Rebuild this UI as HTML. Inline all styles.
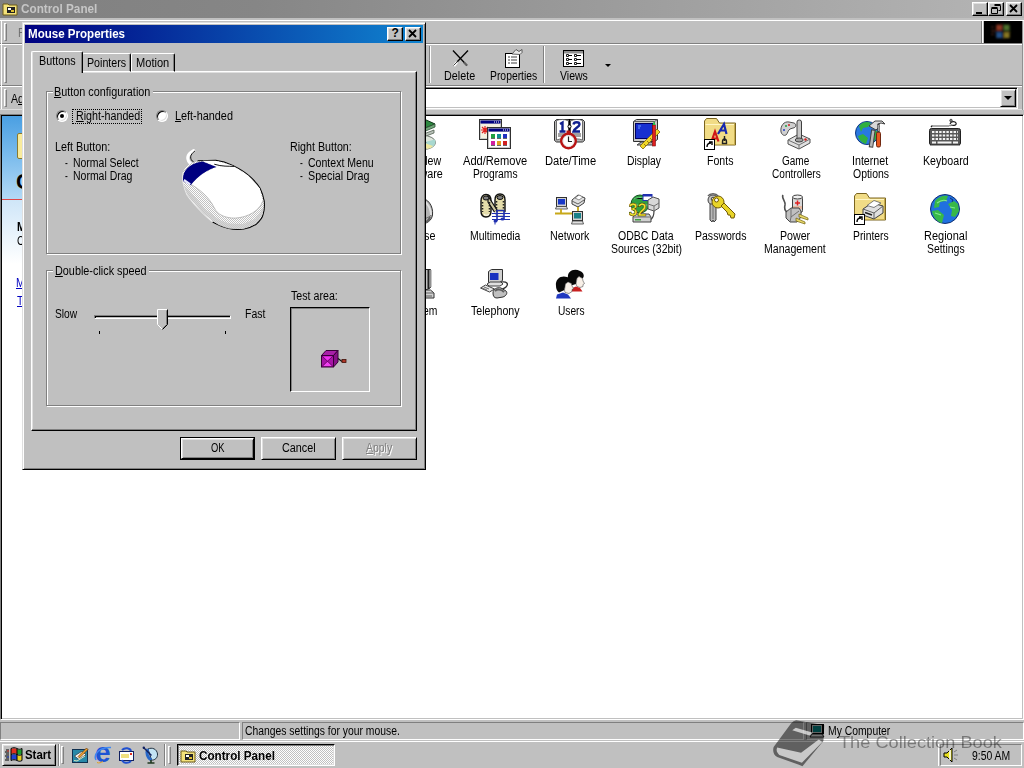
<!DOCTYPE html>
<html><head><meta charset="utf-8"><title>Control Panel</title>
<style>
*{box-sizing:border-box;margin:0;padding:0}
html,body{width:1024px;height:768px;overflow:hidden}
body{background:#c0c0c0;font-family:"Liberation Sans",sans-serif;font-size:12.5px;color:#000;position:relative;line-height:14px}
.a{position:absolute}
.t{position:absolute;white-space:nowrap;line-height:14px;transform-origin:0 0}
u{text-decoration:underline;text-underline-offset:1px;text-decoration-thickness:1px}
.btn{position:absolute;background:#c0c0c0;border:1px solid;border-color:#fff #000 #000 #fff;box-shadow:inset 1px 1px #dfdfdf,inset -1px -1px #808080}
.cap{position:absolute;width:16px;height:14px;background:#c0c0c0;border:1px solid;border-color:#fff #000 #000 #fff;box-shadow:inset -1px -1px #808080,inset 1px 1px #dfdfdf}
.grp{position:absolute;border:1px solid #808080;box-shadow:1px 1px 0 #fff,inset 1px 1px 0 #fff}
.ico{position:absolute;width:32px;height:32px}
.grip{position:absolute;width:3px;border:1px solid;border-color:#fff #808080 #808080 #fff}
.radio{width:12px;height:12px;border-radius:50%;background:#fff;border:1px solid;border-color:#808080 #fff #fff #808080;box-shadow:inset 1px 1px #000,inset -1px -1px #dfdfdf}
.hl{position:absolute;left:0;width:1024px;height:1px}
</style></head><body>
<div class="a" style="left:0;top:0;width:1024px;height:18px;background:linear-gradient(90deg,#808080 0%,#868686 25%,#b5b5b5 100%)"></div>
<svg class="a" style="left:2px;top:1px" width="17" height="16" viewBox="0 0 17 16"><path d="M1 3h5l1 1h8v10H1z" fill="#f4e27a" stroke="#6b5b1a" stroke-width="1"/><rect x="5" y="6" width="8" height="6" fill="#222"/><rect x="6" y="7" width="3" height="2" fill="#fff"/><rect x="9" y="9" width="3" height="2" fill="#e0c030"/></svg>
<div class="t" style="left:20.50px;top:2.00px;font-size:12.5px;transform:scaleX(0.9396);font-weight:bold;color:#c6c6c6;">Control Panel</div>
<div class="cap" style="left:972px;top:2px"><div class="a" style="left:3px;top:9px;width:6px;height:2px;background:#000"></div></div>
<div class="cap" style="left:988px;top:2px"><svg class="a" style="left:1px;top:0" width="12" height="12" viewBox="0 0 12 12"><path d="M4.5 2.5h6v5h-2M4.500 1.500h6" stroke="#000" fill="none"/><path d="M1.500 5.500h6v5h-6zM1.500 4.500h6" stroke="#000" fill="none"/></svg></div>
<div class="cap" style="left:1006px;top:2px"><svg class="a" style="left:2px;top:1px" width="10" height="9" viewBox="0 0 10 9"><path d="M1 1l7 7M8 1l-7 7" stroke="#000" stroke-width="1.8"/></svg></div>
<div class="hl" style="top:20px;background:#fff"></div>
<div class="hl" style="top:43px;background:#808080"></div>
<div class="hl" style="top:44px;background:#fff"></div>
<div class="hl" style="top:85px;background:#808080"></div>
<div class="hl" style="top:86px;background:#fff"></div>
<div class="hl" style="top:109px;background:#dfdfdf"></div>
<div class="a" style="left:1px;top:21px;width:1px;height:88px;background:#fff"></div>
<div class="a" style="left:1022px;top:21px;width:1px;height:89px;background:#909090"></div><div class="a" style="left:1023px;top:21px;width:1px;height:89px;background:#e8e8e8"></div>
<div class="grip" style="left:4px;top:23px;height:18px"></div>
<div class="grip" style="left:4px;top:47px;height:36px"></div>
<div class="grip" style="left:4px;top:89px;height:18px"></div>
<div class="t" style="left:18.43px;top:26.00px;font-size:12.5px;transform:scaleX(0.8703);color:#707070;">File</div>
<div class="t" style="left:11.20px;top:92.00px;font-size:12.5px;transform:scaleX(0.8398);">A<u>d</u>dress</div>
<div class="a" style="left:981px;top:21px;width:1px;height:22px;background:#808080"></div><div class="a" style="left:982px;top:21px;width:1px;height:22px;background:#fff"></div>
<div class="a" style="left:984px;top:21px;width:38px;height:22px;background:#000"></div>
<svg class="a" style="left:990px;top:21px" width="27" height="22" viewBox="0 0 22 18"><defs><filter id="bl"><feGaussianBlur stdDeviation=".9"/></filter></defs><g filter="url(#bl)" opacity=".7"><rect x="5" y="3" width="5" height="5" fill="#c85030"/><rect x="11" y="3" width="5" height="5" fill="#70a040"/><rect x="5" y="9" width="5" height="5" fill="#3070c0"/><rect x="11" y="9" width="5" height="5" fill="#c0a830"/><path d="M10.500 2v13M4 8.500h13" stroke="#101010" stroke-width="1.300"/><path d="M1 5h2M1 8h3M1 11h2" stroke="#804030" stroke-width="1"/></g></svg>
<div class="a" style="left:429px;top:46px;width:1px;height:37px;background:#808080"></div><div class="a" style="left:430px;top:46px;width:1px;height:37px;background:#fff"></div>
<svg class="a" style="left:451px;top:49px" width="19" height="18" viewBox="0 0 19 18"><path d="M2 1.5L16 16.500" stroke="#000" stroke-width="1.300"/><path d="M17 1.500L6 13" stroke="#000" stroke-width="1.300"/><path d="M6 13L3 17" stroke="#fff" stroke-width="2.500"/><path d="M6.500 12.500L2.500 16.500" stroke="#404040" stroke-width="1"/><path d="M13 13.500L16 16.500" stroke="#606060" stroke-width="2"/></svg>
<div class="t" style="left:443.64px;top:69.00px;font-size:12.5px;transform:scaleX(0.8613);">Delete</div>
<svg class="a" style="left:504px;top:48px" width="20" height="20" viewBox="0 0 20 20"><rect x="1.500" y="5.500" width="14" height="14" fill="#fff" stroke="#000"/><path d="M4 9h2M7 9h6M4 12h2M7 12h6M4 15h2M7 15h6" stroke="#404040"/><path d="M8 6l4-4.500l3 2l3-2v3l-2 2z" fill="#e8e8e8" stroke="#404040" stroke-width=".8"/></svg>
<div class="t" style="left:489.97px;top:69.00px;font-size:12.5px;transform:scaleX(0.8291);">Properties</div>
<div class="a" style="left:543px;top:46px;width:1px;height:37px;background:#808080"></div><div class="a" style="left:544px;top:46px;width:1px;height:37px;background:#fff"></div>
<svg class="a" style="left:563px;top:50px" width="22" height="17" viewBox="0 0 22 17"><rect x=".5" y=".5" width="20" height="16" fill="#fff" stroke="#000"/><rect x="1" y="1" width="19" height="2.500" fill="#909090"/><path d="M3.500 4.500h2v2h-2zM11.500 4.500h2v2h-2zM3.500 8.500h2v2h-2zM11.500 8.500h2v2h-2zM3.500 12.500h2v2h-2zM11.500 12.500h2v2h-2z" fill="none" stroke="#000" stroke-width=".9"/><path d="M6 5.500h3M14 5.500h4M6 9.500h3M14 9.500h4M6 13.500h3M14 13.500h4" stroke="#000"/></svg>
<div class="t" style="left:560.40px;top:69.00px;font-size:12.5px;transform:scaleX(0.8397);">Views</div>
<div class="a" style="left:604.5px;top:64px;width:0;height:0;border:3px solid transparent;border-top:3.5px solid #000;border-bottom:0"></div>
<div class="a" style="left:58px;top:87px;width:960px;height:22px;background:#fff;border:1px solid;border-color:#808080 #fff #fff #808080;box-shadow:inset 1px 1px #000,inset -1px -1px #c0c0c0"></div>
<div class="btn" style="left:1000px;top:89px;width:16px;height:18px"><div class="a" style="left:3px;top:6px;border:4px solid transparent;border-top:4px solid #000;border-bottom:0;width:0;height:0"></div></div>
<div class="a" style="left:0;top:114px;width:1024px;height:606px;background:#fff;border:1px solid;border-color:#808080 #fff #fff #808080;box-shadow:inset 1px 1px #000,inset -1px -1px #c0c0c0"></div>
<div class="a" style="left:2px;top:116px;width:198px;height:84px;background:linear-gradient(180deg,#4a9fe2 0%,#78baec 45%,#b4daf6 100%)"></div>
<div class="a" style="left:2px;top:200px;width:198px;height:64px;background:linear-gradient(180deg,#cfe6f8 0%,#ffffff 100%)"></div>
<div class="a" style="left:2px;top:199px;width:198px;height:1px;background:#e04848"></div>
<div class="a" style="left:17px;top:133px;width:32px;height:26px;background:#f8eb9c;border:1px solid #8a7a30;border-radius:2px"></div>
<div class="t" style="left:16px;top:167px;font-size:22px;font-weight:bold;line-height:30px">Control Panel</div>
<div class="t" style="left:17.00px;top:220.00px;font-size:12.5px;transform:scaleX(0.8326);font-weight:bold;">Mouse</div>
<div class="t" style="left:17.00px;top:234.00px;font-size:12.5px;transform:scaleX(0.8096);">Changes settings</div>
<div class="t" style="left:16.16px;top:276.00px;font-size:12.5px;transform:scaleX(0.8433);color:#0000c0;"><u>Microsoft Home</u></div>
<div class="t" style="left:17.00px;top:294.00px;font-size:12.5px;transform:scaleX(0.8309);color:#0000c0;"><u>Technical Support</u></div>
<svg class="ico" style="left:404px;top:118px" viewBox="0 0 32 32"><path d="M6 7l14-6l11 5l-14 6z" fill="#2c8840" stroke="#103818"/><path d="M6 7l11 5l14-6v3l-14 6l-11-5z" fill="#70a878" stroke="#305038" stroke-width=".8"/><path d="M8 13l9 4l13-5v3l-13 5l-9-4z" fill="#b8c0b8" stroke="#506050" stroke-width=".8"/><ellipse cx="19" cy="24.500" rx="12.500" ry="7" fill="#dfe6dc" stroke="#707870"/><path d="M19 24.500l12-3c1 3 0 6-3 8z" fill="#a8d8d0"/><path d="M19 24.500l4 6.500c3-.5 5-1.500 6-3z" fill="#f0e8a0"/><ellipse cx="19" cy="24.500" rx="3" ry="1.700" fill="#fff" stroke="#808080"/></svg>
<div class="t" style="left:398.00px;top:154.00px;font-size:12.5px;transform:scaleX(0.8512);">Add New</div>
<div class="t" style="left:396.14px;top:167.00px;font-size:12.5px;transform:scaleX(0.8641);">Hardware</div>
<svg class="ico" style="left:479px;top:118px" viewBox="0 0 32 32"><rect x=".5" y="1.500" width="22" height="20" fill="#c8c8c8" stroke="#303030"/><rect x="2" y="6" width="19" height="14" fill="#f4f0e0"/><rect x="1.500" y="2.500" width="20" height="3" fill="#000080"/><path d="M15 4h1M17 4h1M19 4h1" stroke="#fff"/><path d="M2 12h8M6 8v8M3 9l6 6M9 9l-6 6" stroke="#e02020" stroke-width="1.200"/><rect x="8.500" y="9.500" width="23" height="21" fill="#c8c8c8" stroke="#303030"/><rect x="10" y="14" width="20" height="15" fill="#fff"/><rect x="9.500" y="10.500" width="21" height="3" fill="#000080"/><path d="M24 12h1M26 12h1M28 12h1" stroke="#fff"/><rect x="12" y="16" width="4" height="4" fill="#20a040"/><rect x="18" y="16" width="4" height="4" fill="#109090"/><rect x="24" y="16" width="4" height="4" fill="#2030c0"/><rect x="12" y="23" width="4" height="4" fill="#d020a0"/><rect x="18" y="23" width="4" height="4" fill="#e0a020"/><rect x="24" y="23" width="4" height="4" fill="#d02020"/><path d="M12 20.500h4M18 20.500h4M24 20.500h4M12 27.500h4M18 27.500h4M24 27.500h4" stroke="#404040" stroke-width=".8"/></svg>
<div class="t" style="left:463.00px;top:154.00px;font-size:12.5px;transform:scaleX(0.8879);">Add/Remove</div>
<div class="t" style="left:473.08px;top:167.00px;font-size:12.5px;transform:scaleX(0.8218);">Programs</div>
<svg class="ico" style="left:554px;top:118px" viewBox="0 0 32 32"><path d="M.5 3.500l2-2h26l2 2v19l-2 1.500h-26l-2-1.500z" fill="#b8b8b8" stroke="#303030"/><path d="M2.500 2.500c4-1.500 8-1.500 12 .5v19c-4-1.500-8-1.500-12 0z" fill="#fff" stroke="#505050" stroke-width=".8"/><path d="M28.500 2.500c-4-1.500-8-1.500-12 .5v19c4-1.500 8-1.500 12 0z" fill="#fff" stroke="#505050" stroke-width=".8"/><path d="M15.500 1v6M15.500 10v5" stroke="#000" stroke-width="1.600"/><circle cx="15.500" cy="8.500" r="1.600" fill="#fff" stroke="#000"/><path d="M6 6l2.500-1.500v9M5.500 13.500h6" stroke="#102090" stroke-width="2.400" fill="none"/><path d="M19.500 6.500c.5-3 6-3 6 0c0 2.500-5 3.500-6 7h6.500" stroke="#102090" stroke-width="2.400" fill="none"/><path d="M4 16h9M4 18h9M18 16h9M18 18h9" stroke="#303030" stroke-width=".9"/><circle cx="14.500" cy="23" r="7.200" fill="#fff" stroke="#b81414" stroke-width="2.600"/><path d="M14.500 18.500v5h3.500" stroke="#202020" stroke-width="1.200" fill="none"/><rect x="12.500" y="12.500" width="4" height="3" fill="#b81414"/><circle cx="14.500" cy="23" r="5.600" fill="none" stroke="#d8d8d8" stroke-width=".8"/></svg>
<div class="t" style="left:544.81px;top:154.00px;font-size:12.5px;transform:scaleX(0.8944);">Date/Time</div>
<svg class="ico" style="left:629px;top:118px" viewBox="0 0 32 32"><path d="M4.500 3.500l3-2h21v20l-3 2h-21z" fill="#c8c8c8" stroke="#303030"/><path d="M25.500 3.500l3-2M4.500 3.500h21v20" fill="none" stroke="#606060"/><rect x="6.500" y="5.500" width="17" height="15" fill="#1830d0" stroke="#000060"/><path d="M9 8h3M9 10h2" stroke="#70a0ff"/><path d="M8 27l4-3h10l4 3z" fill="#b0b0b0" stroke="#404040"/><path d="M11 28l17-17l3 3l-17 17z" fill="#f0d828" stroke="#806010" stroke-width=".8"/><path d="M15 26l2 2M18 23l2 2M21 20l2 2M24 17l2 2" stroke="#806010" stroke-width=".8"/><rect x="23.500" y="7" width="3" height="21" fill="#e02020" stroke="#801010" stroke-width=".6"/><path d="M23.500 7l1.500-4l1.500 4z" fill="#20c040"/></svg>
<div class="t" style="left:627.47px;top:154.00px;font-size:12.5px;transform:scaleX(0.8298);">Display</div>
<svg class="ico" style="left:704px;top:118px" viewBox="0 0 32 32"><path d="M.5 27V3l2-2.500h10l3 4.500h16v22z" fill="#f1dc86" stroke="#7a6420" stroke-width="1"/><path d="M1.500 6.500h29" stroke="#fff6c4" stroke-width="1"/><path d="M30.500 6v20.500h-29" stroke="#c8ae50" stroke-width="1" fill="none"/><path d="M7.500 23.500l3.500-10l3.500 10M9 20.500h4.500" stroke="#d01818" stroke-width="2.200" fill="none"/><path d="M14 16l6-10l2.500 10M16 12.500h6" stroke="#1828b0" stroke-width="2.200" fill="none"/><path d="M18.500 24c0-4 4-4 4 0v1.500h-4zM20.500 18v5" stroke="#202020" stroke-width="1.400" fill="none"/><rect x=".5" y="21.500" width="10" height="10" fill="#fff" stroke="#000"/><path d="M3 29c0-3 2-4 4-4M5 24h3v3" fill="none" stroke="#000" stroke-width="1.400"/></svg>
<div class="t" style="left:706.75px;top:154.00px;font-size:12.5px;transform:scaleX(0.8463);">Fonts</div>
<svg class="ico" style="left:779px;top:118px" viewBox="0 0 32 32"><path d="M2 14c-1-6 3-11 8-10l5 1c3 1 2 5-1 5l-3 1c-2 1-2 4-4 6c-2 1-4 0-5-3z" fill="#d0d0d0" stroke="#505050"/><circle cx="7" cy="8" r="1" fill="#20a040"/><circle cx="10" cy="7" r="1" fill="#d02020"/><circle cx="5" cy="12" r="1" fill="#2040c0"/><path d="M9 22l11-6l11 5v4l-11 6l-11-5z" fill="#e0e0e0" stroke="#505050"/><path d="M9 22l11 5l11-6M20 27v4" fill="none" stroke="#707070"/><rect x="18" y="2" width="4.500" height="20" rx="2" fill="#c8c8c8" stroke="#404040"/><ellipse cx="20.200" cy="22" rx="4" ry="2" fill="#a0a0a0" stroke="#404040"/><circle cx="26.500" cy="21.500" r="1.300" fill="#d02020"/></svg>
<div class="t" style="left:781.70px;top:154.00px;font-size:12.5px;transform:scaleX(0.8009);">Game</div>
<div class="t" style="left:771.50px;top:167.00px;font-size:12.5px;transform:scaleX(0.8058);">Controllers</div>
<svg class="ico" style="left:854px;top:118px" viewBox="0 0 32 32"><circle cx="13" cy="15" r="11.500" fill="#2878e0" stroke="#103880"/><path d="M5 8c3-4 8-5 12-3l-3 4l-5 1l-2 4z" fill="#30b040"/><path d="M4 18l5-2l5 4l-2 6c-4-1-7-4-8-8z" fill="#30b040"/><path d="M18 12l5 1l1 6l-4 4z" fill="#30b040"/><path d="M15 8l6-5h7l3 3l-4-1l-3 1l1 3l-3 3z" fill="#d8d8d8" stroke="#404040"/><rect x="16.500" y="12" width="3.500" height="17" fill="#b8b8b8" stroke="#404040" transform="rotate(8 18 20)"/><rect x="22.500" y="14" width="4" height="15" rx="1.500" fill="#e85820" stroke="#702810"/><rect x="23.700" y="6" width="1.600" height="8" fill="#a0a0a0" stroke="#404040" stroke-width=".6"/></svg>
<div class="t" style="left:851.65px;top:154.00px;font-size:12.5px;transform:scaleX(0.8541);">Internet</div>
<div class="t" style="left:852.50px;top:167.00px;font-size:12.5px;transform:scaleX(0.8359);">Options</div>
<svg class="ico" style="left:929px;top:118px" viewBox="0 0 32 32"><path d="M21 6c1-3 5-3 6-1c1 2-2 3-5 2" fill="none" stroke="#202020" stroke-width="1.200"/><circle cx="22" cy="2.500" r="1.300" fill="#808080" stroke="#202020" stroke-width=".6"/><path d="M2 9l1.500-1.500M4.500 8h1M6.500 8h1M8.500 8h1M10.500 8h1M12.500 8h1M14.500 8h1M16.500 8h1M18.500 8h1M20.500 7.500h1" stroke="#202020" stroke-width="1.400"/><rect x=".5" y="10.500" width="31" height="16.500" rx="2" fill="#585858" stroke="#202020"/><path d="M3 14h26M3 17.500h26M3 21h26" stroke="#f4f4f4" stroke-width="2.200" stroke-dasharray="2.400 1.200"/><path d="M3 24.500h4M8.500 24.500h14M24 24.500h5" stroke="#f4f4f4" stroke-width="2.200"/><path d="M1 27.500h30" stroke="#a0a0a0"/></svg>
<div class="t" style="left:922.85px;top:154.00px;font-size:12.5px;transform:scaleX(0.8524);">Keyboard</div>
<svg class="ico" style="left:404px;top:193px" viewBox="0 0 32 32"><path d="M4 22c-3-9 4-17 12-17c8 0 13.500 8 12.500 17c-1 6-6 9-12 9c-6 0-11-3-12.500-9z" fill="#b4b4b4" stroke="#303030"/><path d="M6 23c4 4 15 5 21.500-1" fill="none" stroke="#707070"/><path d="M14 6c7 0 13 8 13 16" fill="none" stroke="#e0e0e0" stroke-width="2"/><path d="M26 24c-1 4-5 6-10 6" fill="none" stroke="#606060" stroke-width="2"/></svg>
<div class="t" style="left:403.34px;top:229.00px;font-size:12.5px;transform:scaleX(0.8642);">Mouse</div>
<svg class="ico" style="left:479px;top:193px" viewBox="0 0 32 32"><path d="M2 8c0-4 2-6.500 5-6.500s5 2.500 5 6.500v10c0 4-2 6-5 6s-5-2-5-6z" fill="#e4dcaa" stroke="#101010" stroke-width="1.400"/><path d="M16 7c0-4 2-6 5-6s5 2 5 6v11c0 3-2 5-5 5s-5-2-5-5z" fill="#e4dcaa" stroke="#101010" stroke-width="1.400"/><path d="M9 3l9 14v6l-9-14z" fill="#cfc8a0" stroke="#101010" stroke-width="1.200"/><ellipse cx="7" cy="5" rx="3" ry="2" fill="#808080" stroke="#101010"/><ellipse cx="21" cy="4.500" rx="3" ry="2" fill="#808080" stroke="#101010"/><path d="M3.500 9v10M10.500 9v10M17.500 8v10M24.500 8v10" stroke="#202020" stroke-width="1.600" stroke-dasharray="1.500 1.500"/><path d="M5 21.500c2 1 3 1 5 0M19 20.500c2 1 3 1 5 0" stroke="#fff" stroke-width="1" fill="none"/><rect x="13" y="19" width="18" height="10" fill="#fff" opacity=".75"/><path d="M13 20.500h18M13 23.500h18M13 26.500h18" stroke="#2030b0" stroke-width="1"/><path d="M18 17v11M25 18v8M18 17.500h7.500" stroke="#2030b0" stroke-width="1.600" fill="none"/><ellipse cx="16.500" cy="28" rx="2" ry="1.500" fill="#2030b0"/><ellipse cx="23.500" cy="26" rx="2" ry="1.500" fill="#2030b0"/><path d="M16 29v2.500" stroke="#2030b0"/></svg>
<div class="t" style="left:469.67px;top:229.00px;font-size:12.5px;transform:scaleX(0.8338);">Multimedia</div>
<svg class="ico" style="left:554px;top:193px" viewBox="0 0 32 32"><rect x="2.500" y="4.500" width="10" height="9" fill="#d0d0d0" stroke="#303030"/><rect x="4" y="6" width="7" height="5.500" fill="#1838c8"/><path d="M1.500 16l1-2.500h10l1 2.500z" fill="#e0e0e0" stroke="#404040" stroke-width=".8"/><path d="M18 7l6-5l7 3l-1 5l-6 4l-6-3z" fill="#e0e0e0" stroke="#404040"/><path d="M21 5l4-3l4 2l-4 3z" fill="#fff" stroke="#606060" stroke-width=".7"/><path d="M18 8l6 3l6-4" fill="none" stroke="#606060"/><path d="M1 20.500h28M7 16v4.500M24 14v6.500M20 20.500v3" stroke="#c8a818" stroke-width="1.800" fill="none"/><rect x="18.500" y="18.500" width="10" height="9" fill="#d0d0d0" stroke="#303030"/><rect x="20" y="20" width="7" height="5.500" fill="#188088"/><path d="M17.500 31l1-3h10l1 3z" fill="#e0e0e0" stroke="#404040" stroke-width=".8"/></svg>
<div class="t" style="left:549.74px;top:229.00px;font-size:12.5px;transform:scaleX(0.8576);">Network</div>
<svg class="ico" style="left:629px;top:193px" viewBox="0 0 32 32"><circle cx="11" cy="11" r="9" fill="#30a040" stroke="#105020"/><path d="M5 6c4-2 8-2 12 0M3 12h16" stroke="#70d080" stroke-width="1"/><rect x="14" y="1.500" width="9" height="6" fill="#fff" stroke="#2030b0"/><rect x="14" y="1.500" width="9" height="2" fill="#2030b0"/><path d="M19 7l5-3l6 2v9l-5 3l-6-2z" fill="#d8d8d8" stroke="#505050"/><path d="M19 11l6 2l5-3M25 13v5" fill="none" stroke="#707070"/><path d="M25 18c0 5-2 8-4 9" fill="none" stroke="#404040" stroke-width="1.200"/><path d="M4 24l2-3h14l2 3v5h-18z" fill="#d0d0d0" stroke="#404040"/><path d="M4 24h18" stroke="#707070"/><rect x="6" y="26" width="6" height="1.500" fill="#40a040"/><text x="-.5" y="22.500" font-family="Liberation Sans" font-weight="bold" font-size="17.500" fill="#f8ec30" stroke="#302800" stroke-width=".55" textLength="18" lengthAdjust="spacingAndGlyphs">32</text></svg>
<div class="t" style="left:617.60px;top:229.00px;font-size:12.5px;transform:scaleX(0.8419);">ODBC Data</div>
<div class="t" style="left:610.70px;top:242.00px;font-size:12.5px;transform:scaleX(0.8381);">Sources (32bit)</div>
<svg class="ico" style="left:704px;top:193px" viewBox="0 0 32 32"><circle cx="9" cy="7" r="5" fill="#c8c8c8" stroke="#404040"/><circle cx="9" cy="6" r="1.800" fill="#fff" stroke="#404040"/><path d="M6 11h6v16l-2 2l-1-2l-1 2l-2-2z" fill="#b8b8b8" stroke="#404040"/><path d="M9 12v14" stroke="#707070"/><circle cx="14" cy="9" r="6" fill="#e8d428" stroke="#705808"/><circle cx="12.500" cy="7" r="2" fill="#fff" stroke="#705808"/><path d="M17 13l3-3l11 11l-1 4h-3l-1-3h-2l-1-3z" fill="#e8d428" stroke="#705808"/><path d="M4 3c2-3 8-3 10 0" fill="none" stroke="#606060" stroke-width="1.500"/></svg>
<div class="t" style="left:694.86px;top:229.00px;font-size:12.5px;transform:scaleX(0.8416);">Passwords</div>
<svg class="ico" style="left:779px;top:193px" viewBox="0 0 32 32"><path d="M4 2c-2 3 3 6 2 10c-1 3 0 6 3 8" fill="none" stroke="#505050" stroke-width="1.600"/><rect x="13.500" y="3.500" width="10" height="16" rx="2" fill="#d8d8d8" stroke="#404040"/><ellipse cx="18.500" cy="4" rx="5" ry="2" fill="#f0f0f0" stroke="#404040"/><path d="M16 10h5M18.500 7.500v5" stroke="#e02020" stroke-width="1.500"/><rect x="14" y="13" width="9" height="3" fill="#e8b8a0"/><path d="M7 19l5-4h8l2 3v6l-4 5h-7l-4-4z" fill="#c0c0c0" stroke="#404040"/><path d="M12 15v9l-1 5M20 18l-8 6" fill="none" stroke="#707070"/><path d="M20 21l9 4v2l-9-3zM17 25l9 4v2l-9-3z" fill="#e8d868" stroke="#706010" stroke-width=".7"/></svg>
<div class="t" style="left:779.85px;top:229.00px;font-size:12.5px;transform:scaleX(0.8492);">Power</div>
<div class="t" style="left:763.65px;top:242.00px;font-size:12.5px;transform:scaleX(0.8457);">Management</div>
<svg class="ico" style="left:854px;top:193px" viewBox="0 0 32 32"><path d="M.5 27V3l2-2.500h10l3 4.500h16v22z" fill="#f1dc86" stroke="#7a6420" stroke-width="1"/><path d="M1.500 6.500h29" stroke="#fff6c4" stroke-width="1"/><path d="M30.500 6v20.500h-29" stroke="#c8ae50" stroke-width="1" fill="none"/><path d="M9 16l9-6l11 3v7l-9 6l-11-4z" fill="#e0e0e0" stroke="#404040"/><path d="M9 16l11 4l9-7M20 20v6" fill="none" stroke="#606060"/><path d="M13 12.500l7-5l7 2.500l-7 4.500z" fill="#fff" stroke="#606060" stroke-width=".8"/><path d="M11 19.500l7 2.600" stroke="#202020" stroke-width="1.600"/><rect x=".5" y="21.500" width="10" height="10" fill="#fff" stroke="#000"/><path d="M3 29c0-3 2-4 4-4M5 24h3v3" fill="none" stroke="#000" stroke-width="1.400"/></svg>
<div class="t" style="left:852.87px;top:229.00px;font-size:12.5px;transform:scaleX(0.8274);">Printers</div>
<svg class="ico" style="left:929px;top:193px" viewBox="0 0 32 32"><circle cx="16" cy="16" r="14.500" fill="#2070e0" stroke="#103070"/><path d="M6 8c3-4 8-6 13-5l-2 5l-6 1l-1 5l-5 1z" fill="#38b848"/><path d="M3 18l6-1l6 5l-2 8c-5-1-9-6-10-12z" fill="#38b848"/><path d="M19 11l6-3l4 3l1 7l-4 6l-4-1l1-6z" fill="#38b848"/><path d="M8 10c4-3 8-3 10-2M6 20l6 2M21 14l5 1" stroke="#80e890" stroke-width="1.200" fill="none"/><path d="M21 5l3 2-1 2" stroke="#103070" fill="none"/></svg>
<div class="t" style="left:923.72px;top:229.00px;font-size:12.5px;transform:scaleX(0.8788);">Regional</div>
<div class="t" style="left:926.60px;top:242.00px;font-size:12.5px;transform:scaleX(0.8327);">Settings</div>
<svg class="ico" style="left:404px;top:268px" viewBox="0 0 32 32"><path d="M2.500 3.500l3-2h21v18l-3 2h-21z" fill="#c0c0c0" stroke="#202020"/><rect x="5" y="5" width="16" height="13" fill="#1830c0"/><path d="M24.500 2v19" stroke="#202020" stroke-width="2"/><path d="M26.500 2v17" stroke="#909090" stroke-width="2"/><path d="M1.500 25l3-3h22l3.500 3v5h-28.500z" fill="#d0d0d0" stroke="#303030"/><path d="M1.500 25h28.500" stroke="#606060" fill="none"/><path d="M22 28h6" stroke="#808080" stroke-width="1.500"/></svg>
<div class="t" style="left:403.00px;top:304.00px;font-size:12.5px;transform:scaleX(0.8264);">System</div>
<svg class="ico" style="left:479px;top:268px" viewBox="0 0 32 32"><path d="M9.500 3.500l3-2h11v11l-3 2h-11z" fill="#d0d0d0" stroke="#303030"/><rect x="11" y="5" width="8.500" height="7" fill="#1830c0"/><path d="M8 16l3-2h11l2 2l-3 2h-11z" fill="#e0e0e0" stroke="#404040"/><path d="M1.500 20l5-3l9 4l-5 3z" fill="#e8e8e8" stroke="#404040"/><path d="M3 20l5 2M5 19l5 2" stroke="#707070"/><path d="M22 14c6-1 8 2 5 5c-2 2-5 2-6 4" fill="none" stroke="#303030" stroke-width="1.200"/><path d="M14 25c0-4 4-6 8-5l5 3c2 2 0 5-3 6l-6 1c-3 0-4-2-4-5z" fill="#c0c0c0" stroke="#303030"/><path d="M16 23c2-2 6-2 9 1" fill="none" stroke="#606060" stroke-width="2"/></svg>
<div class="t" style="left:470.90px;top:304.00px;font-size:12.5px;transform:scaleX(0.8521);">Telephony</div>
<svg class="ico" style="left:554px;top:268px" viewBox="0 0 32 32"><path d="M14 10C13 3 20 0 26 3C30.500 5 30.500 9 28.500 10.500L25 8.500L23 10.500L22 16L17 17.500Q14 14 14 10Z" fill="#080808"/><path d="M23 10.500L25 8.500L28.500 10.500L29 13L30.500 15.500L29 16.500L29 18.500L26 19.500L23 18.500L22 16Z" fill="#f8f0e8" stroke="#505050" stroke-width=".6"/><path d="M16 21L22 18.500L26 20L28.500 23.500L15 23.500Z" fill="#c82020"/><path d="M2 18C1 10 8 7 13 9C17 10 18.500 13 17.500 15.500L14 14L11.500 16L10.500 22L5 24.500Q2 22 2 18Z" fill="#080808"/><path d="M11.500 16L14 14L17.500 15.500L18 18L19.500 20.500L18 21.500L18 23.500L15 25.500L11 24.500L10.500 22Z" fill="#f8f0e8" stroke="#505050" stroke-width=".6"/><path d="M3 26.500L9 24.500L14 26.500L17 30.500L2 30.500Z" fill="#2038c0"/></svg>
<div class="t" style="left:557.80px;top:304.00px;font-size:12.5px;transform:scaleX(0.8150);">Users</div>
<div class="a" style="left:0;top:722px;width:240px;height:18px;border:1px solid;border-color:#808080 #fff #fff #808080"></div>
<div class="a" style="left:242px;top:722px;width:562px;height:18px;border:1px solid;border-color:#808080 #fff #fff #808080"></div>
<div class="t" style="left:244.60px;top:724.00px;font-size:12.5px;transform:scaleX(0.8282);">Changes settings for your mouse.</div>
<div class="a" style="left:806px;top:722px;width:218px;height:18px;border:1px solid;border-color:#808080 #fff #fff #808080"></div>
<svg class="a" style="left:809px;top:723px" width="16" height="16" viewBox="0 0 16 16"><rect x="2.500" y="1.500" width="11" height="9" fill="#c0c0c0" stroke="#000"/><rect x="4" y="3" width="8" height="6" fill="#008080"/><path d="M1 14l2-3h10l2 3z" fill="#e0e0e0" stroke="#000" stroke-width=".8"/><path d="M14.500 1v10" stroke="#000"/></svg>
<div class="t" style="left:827.67px;top:724.00px;font-size:12.5px;transform:scaleX(0.8300);">My Computer</div>
<div class="hl" style="top:741px;background:#fff"></div>
<div class="btn" style="left:2px;top:744px;width:54px;height:22px"></div>
<svg class="a" style="left:5px;top:747px" width="18" height="16" viewBox="0 0 18 16"><path d="M6 2c2-1 4-1 6 0v5c-2-1-4-1-6 0z" fill="#e03020"/><path d="M12 2c2 1 3 1 5 0v5c-2 1-3 1-5 0z" fill="#20a030"/><path d="M6 8c2-1 4-1 6 0v5c-2-1-4-1-6 0z" fill="#2040d0"/><path d="M12 8c2 1 3 1 5 0v5c-2 1-3 1-5 0z" fill="#e8d020"/><path d="M6 1.500c2-1 4-1 6 0c2 1 3 1 5 0v12c-2 1-3 1-5 0c-2-1-4-1-6 0z" fill="none" stroke="#000" stroke-width="1"/><path d="M12 2v11M6 7.500c2-1 4-1 6 0c2 1 3 1 5 0" stroke="#000" fill="none"/><path d="M1 3h3M0 5h4M1 7h3M0 9h4M1 11h3M0 13h4" stroke="#000" stroke-width="1"/><path d="M2 4h2" stroke="#e03020"/><path d="M2 10h2" stroke="#2040d0"/></svg>
<div class="t" style="left:25.00px;top:748.00px;font-size:12.5px;transform:scaleX(0.9142);font-weight:bold;">Start</div>
<div class="a" style="left:58px;top:744px;width:1px;height:22px;background:#808080"></div><div class="a" style="left:59px;top:744px;width:1px;height:22px;background:#fff"></div>
<div class="a" style="left:164px;top:744px;width:1px;height:22px;background:#808080"></div><div class="a" style="left:165px;top:744px;width:1px;height:22px;background:#fff"></div>
<div class="grip" style="left:61px;top:746px;height:18px"></div>
<svg class="a" style="left:72px;top:747px" width="17" height="17" viewBox="0 0 17 17"><rect x=".5" y="2.500" width="15" height="13" fill="#2888a8" stroke="#103050"/><path d="M2.500 9l7-4.500l4.500 3l-7 5z" fill="#fff" stroke="#303030" stroke-width=".7"/><path d="M6 9.500l8.500-8.500l1.500 1.500l-8.500 8.500z" fill="#f0a030" stroke="#603810" stroke-width=".7"/><path d="M2 13.500l3 .5l8-5" stroke="#d8e8c0" stroke-width="1" fill="none"/></svg>
<svg class="a" style="left:94px;top:745px" width="20" height="20" viewBox="0 0 20 20"><text x="1" y="17" font-family="Liberation Sans" font-weight="bold" font-size="28" fill="#1c54d4">e</text><path d="M2 15C-1 9 6 2 17 2.500" stroke="#4088f0" stroke-width="1.500" fill="none"/><path d="M3 17.500c2 1 4 0 6-1" stroke="#e0a020" stroke-width="1" fill="none"/></svg>
<svg class="a" style="left:118px;top:747px" width="17" height="17" viewBox="0 0 17 17"><rect x="1.500" y="4.500" width="14" height="9" fill="#fff" stroke="#102060"/><rect x="3" y="7" width="8" height="4" fill="#f0e080"/><path d="M4 3c3-3 8-2 9 1M13 14c-3 3-8 2-9-1" stroke="#2050d0" stroke-width="2" fill="none"/><rect x="12" y="6" width="2" height="2" fill="#e03020"/></svg>
<svg class="a" style="left:142px;top:746px" width="17" height="19" viewBox="0 0 17 19"><path d="M6 3c4-2 9 0 9.500 5c.3 4-3 6.500-6 6z" fill="#c4e4f4" stroke="#203040" stroke-width="1"/><path d="M6 3c-2 3-1 9 3.500 11" fill="none" stroke="#2868c8" stroke-width="3"/><path d="M1.500 1.500l8 8" stroke="#102060" stroke-width="1.500"/><circle cx="1.800" cy="1.800" r="1.200" fill="#102060"/><path d="M5.500 17h7M9 14v3" stroke="#203820" stroke-width="1.600"/></svg>
<div class="grip" style="left:168px;top:746px;height:18px"></div>
<div class="a" style="left:177px;top:744px;width:158px;height:22px;border:1px solid;border-color:#000 #fff #fff #000;box-shadow:inset 1px 1px #808080,inset -1px -1px #dfdfdf;background-color:#fff;background-image:linear-gradient(45deg,#c0c0c0 25%,transparent 25%,transparent 75%,#c0c0c0 75%),linear-gradient(45deg,#c0c0c0 25%,transparent 25%,transparent 75%,#c0c0c0 75%);background-size:2px 2px;background-position:0 0,1px 1px"></div>
<svg class="a" style="left:180px;top:748px" width="17" height="16" viewBox="0 0 17 16"><path d="M1 3h5l1 1h8v10H1z" fill="#f4e27a" stroke="#6b5b1a" stroke-width="1"/><rect x="5" y="6" width="8" height="6" fill="#222"/><rect x="6" y="7" width="3" height="2" fill="#fff"/><rect x="9" y="9" width="3" height="2" fill="#e0c030"/></svg>
<div class="t" style="left:199.00px;top:749.00px;font-size:12.5px;transform:scaleX(0.9346);font-weight:bold;">Control Panel</div>
<div class="a" style="left:938px;top:744px;width:1px;height:22px;background:#fff"></div>
<div class="a" style="left:940px;top:744px;width:82px;height:22px;border:1px solid;border-color:#808080 #fff #fff #808080"></div>
<svg class="a" style="left:943px;top:747px" width="18" height="16" viewBox="0 0 18 16"><path d="M1 6h3l5-5v14l-5-5h-3z" fill="#e8e020" stroke="#000" stroke-width="1"/><path d="M7 3v10" stroke="#fff" stroke-width="1.500"/><path d="M11 5l3-2M11 8h4M11 11l3 2" stroke="#808080" stroke-width="1"/></svg>
<div class="t" style="left:971.70px;top:749.00px;font-size:12.5px;transform:scaleX(0.8344);">9:50 AM</div>
<div class="a" style="left:22px;top:22px;width:404px;height:448px;background:#c0c0c0;border:1px solid;border-color:#dfdfdf #000 #000 #dfdfdf;box-shadow:inset 1px 1px #fff,inset -1px -1px #808080"></div>
<div class="a" style="left:25px;top:25px;width:398px;height:18px;background:linear-gradient(90deg,#000080,#1084d0)"></div>
<div class="t" style="left:28.00px;top:27.00px;font-size:12.5px;transform:scaleX(0.9253);font-weight:bold;color:#fff;">Mouse Properties</div>
<div class="cap" style="left:387px;top:27px"><div class="t" style="left:3.500px;top:-1px;font-weight:bold;font-size:12px;line-height:13px">?</div></div>
<div class="cap" style="left:405px;top:27px"><svg class="a" style="left:2px;top:1px" width="10" height="9" viewBox="0 0 10 9"><path d="M1 1l7 7M8 1l-7 7" stroke="#000" stroke-width="1.8"/></svg></div>
<div class="a" style="left:31px;top:71px;width:386px;height:360px;border:1px solid;border-color:#fff #000 #000 #fff;box-shadow:inset -1px -1px #808080,inset 1px 1px #dfdfdf"></div>
<div class="a" style="left:82px;top:53px;width:49px;height:19px;border:1px solid;border-color:#fff #000 transparent #fff;border-radius:2px 2px 0 0;box-shadow:inset -1px 0 #808080"></div>
<div class="a" style="left:131px;top:53px;width:44px;height:19px;border:1px solid;border-color:#fff #000 transparent #fff;border-radius:2px 2px 0 0;box-shadow:inset -1px 0 #808080"></div>
<div class="t" style="left:86.55px;top:56.00px;font-size:12.5px;transform:scaleX(0.8542);">Pointers</div>
<div class="t" style="left:136.11px;top:56.00px;font-size:12.5px;transform:scaleX(0.8861);">Motion</div>
<div class="a" style="left:31px;top:51px;width:52px;height:22px;background:#c0c0c0;border:1px solid;border-color:#fff #000 #c0c0c0 #fff;border-bottom:0;border-radius:2px 2px 0 0;box-shadow:inset -1px 0 #808080,inset 1px 0 #dfdfdf"></div>
<div class="t" style="left:38.64px;top:54.00px;font-size:12.5px;transform:scaleX(0.8629);">Buttons</div>
<div class="grp" style="left:46px;top:91px;width:355px;height:163px"></div>
<div class="a" style="left:53px;top:89px;width:100px;height:6px;background:#c0c0c0"></div>
<div class="t" style="left:54.13px;top:85.00px;font-size:12.5px;transform:scaleX(0.8663);"><u>B</u>utton configuration</div>
<div class="a radio" style="left:56px;top:110px"></div>
<div class="a" style="left:60px;top:114px;width:4px;height:4px;background:#000;border-radius:2px"></div>
<div class="a" style="left:72px;top:109px;width:70px;height:15px;border:1px dotted #000"></div>
<div class="t" style="left:75.74px;top:109.00px;font-size:12.5px;transform:scaleX(0.8556);"><u>R</u>ight-handed</div>
<div class="a radio" style="left:156px;top:110px"></div>
<div class="t" style="left:175.43px;top:109.00px;font-size:12.5px;transform:scaleX(0.8682);"><u>L</u>eft-handed</div>
<div class="t" style="left:54.64px;top:140.00px;font-size:12.5px;transform:scaleX(0.8645);">Left Button:</div>
<div class="t" style="left:65.30px;top:156.00px;font-size:12.5px;transform:scaleX(0.6750);">-</div>
<div class="t" style="left:72.86px;top:156.00px;font-size:12.5px;transform:scaleX(0.8369);">Normal Select</div>
<div class="t" style="left:65.30px;top:169.00px;font-size:12.5px;transform:scaleX(0.6750);">-</div>
<div class="t" style="left:72.86px;top:169.00px;font-size:12.5px;transform:scaleX(0.8384);">Normal Drag</div>
<div class="t" style="left:289.65px;top:140.00px;font-size:12.5px;transform:scaleX(0.8546);">Right Button:</div>
<div class="t" style="left:300.00px;top:156.00px;font-size:12.5px;transform:scaleX(0.6750);">-</div>
<div class="t" style="left:308.30px;top:156.00px;font-size:12.5px;transform:scaleX(0.8437);">Context Menu</div>
<div class="t" style="left:300.00px;top:169.00px;font-size:12.5px;transform:scaleX(0.6750);">-</div>
<div class="t" style="left:308.30px;top:169.00px;font-size:12.5px;transform:scaleX(0.8574);">Special Drag</div>
<svg class="a" style="left:170px;top:140px" width="110" height="100" viewBox="0 0 845 768"><defs><pattern id="dz" width="15.360" height="15.360" patternUnits="userSpaceOnUse"><rect width="15.360" height="15.360" fill="#fff"/><rect width="7.680" height="7.680" fill="#c0c0c0"/><rect x="7.680" y="7.680" width="7.680" height="7.680" fill="#c0c0c0"/></pattern></defs><path d="M182 82 C128 112 120 150 168 190" fill="none" stroke="#fff" stroke-width="24" stroke-linecap="round"/><path d="M192 84 C152 112 146 146 184 172" fill="none" stroke="#000" stroke-width="7"/><path d="M100 250 C90 300 100 350 130 420 C170 480 210 520 250 560 C290 600 330 630 370 650 C420 675 500 690 560 684 C610 675 640 660 660 645 C690 620 710 590 715 565 C725 530 725 500 722 470 C715 430 705 400 690 370 C660 320 630 295 600 270 C560 235 520 215 480 195 C440 175 390 160 350 158 L250 158 C210 162 180 170 150 185 C125 205 105 225 100 250 Z" fill="url(#dz)"/><path d="M100 250 C90 300 100 350 130 420 C170 480 210 520 250 560 C290 600 320 625 345 640" fill="none" stroke="#ececec" stroke-width="8"/><path d="M330 632 C345 640 355 645 370 652 C420 677 500 692 560 686 C610 677 640 662 662 647 C692 622 712 592 717 566 C727 530 727 500 724 470 C717 430 707 400 692 370 C662 320 632 295 602 270 C562 235 522 215 482 195 C442 175 392 160 352 156 L215 160" fill="none" stroke="#000" stroke-width="8" stroke-linecap="round"/><path d="M100 340 L135 425 L255 565 L372 652 L452 682 L560 685 L660 646 L714 566 L716 520 L655 605 L560 645 L455 642 L380 615 L270 530 L150 390 Z" fill="#c8c8c8" opacity=".75"/><path d="M160 340 C230 380 300 440 340 520 C360 570 420 600 500 600 C600 595 690 540 712 470 L690 372 L600 272 L480 198 L355 205 L230 270 Z" fill="#fff"/><path d="M160 340 C230 380 300 440 340 520 C360 570 420 600 500 600 C600 595 690 540 712 470" fill="none" stroke="#a0a0a0" stroke-width="5"/><path d="M250 160 L350 160 L480 197 L355 207 Z" fill="#fff"/><path d="M340 186 C400 205 450 200 492 203" fill="none" stroke="#000" stroke-width="7"/><path d="M100 305 C98 240 140 182 250 165 L358 207 C290 225 220 270 158 348 L100 315 Z" fill="#000080"/><path d="M102 315 L152 348 L160 335 L112 300 Z" fill="#e8e8ff"/></svg>
<div class="grp" style="left:46px;top:270px;width:355px;height:136px"></div>
<div class="a" style="left:53px;top:268px;width:96px;height:6px;background:#c0c0c0"></div>
<div class="t" style="left:54.93px;top:264.00px;font-size:12.5px;transform:scaleX(0.8676);"><u>D</u>ouble-click speed</div>
<div class="t" style="left:55.00px;top:307.00px;font-size:12.5px;transform:scaleX(0.8195);">Slow</div>
<div class="t" style="left:244.56px;top:307.00px;font-size:12.5px;transform:scaleX(0.8390);">Fast</div>
<div class="a" style="left:94px;top:315px;width:137px;height:4px;border:1px solid;border-color:#808080 #fff #fff #808080;box-shadow:inset 1px 1px #000;background:#c0c0c0"></div>
<div class="a" style="left:99px;top:331px;width:1px;height:3px;background:#000"></div>
<div class="a" style="left:225px;top:331px;width:1px;height:3px;background:#000"></div>
<svg class="a" style="left:157px;top:309px" width="12" height="22" viewBox="0 0 12 22"><path d="M0.500 0.500h10v15l-5 5l-5-5z" fill="#c0c0c0"/><path d="M0.500 15.500v-15h10" stroke="#fff" fill="none"/><path d="M0.500 15.500l5 5" stroke="#fff" fill="none"/><path d="M10.500 0.500v15l-5 5" stroke="#000" fill="none"/><path d="M9.500 1.500v14l-4 4" stroke="#808080" fill="none"/></svg>
<div class="t" style="left:291.00px;top:289.00px;font-size:12.5px;transform:scaleX(0.8527);">Test area:</div>
<div class="a" style="left:290px;top:307px;width:80px;height:85px;border:1px solid;border-color:#000 #fff #fff #000;box-shadow:inset 1px 1px #808080"></div>
<svg class="a" style="left:320px;top:349px" width="28" height="20" viewBox="0 0 28 20"><path d="M1.500 6.500l4.500-5h12l-4.500 5z" fill="#a820a8" stroke="#380038" stroke-width="1"/><path d="M13.500 6.500l4.500-5v11.500l-4.500 5z" fill="#881088" stroke="#380038" stroke-width="1"/><rect x="1.500" y="6.500" width="12" height="11.500" fill="#a814a8" stroke="#380038" stroke-width="1"/><path d="M3 7.500h9l-4.500 4.500z" fill="#f030f0"/><path d="M3 17h9l-4.500-4.500z" fill="#f040f0"/><path d="M2 7l11 10.500M13 7l-11 10.500" stroke="#5a005a" stroke-width=".7" fill="none"/><path d="M18 9.500l4 3" stroke="#101010" stroke-width="1.200"/><rect x="22" y="10.500" width="4" height="3" fill="#b03828" stroke="#401008" stroke-width=".8"/></svg>
<div class="a" style="left:180px;top:437px;width:75px;height:23px;border:1px solid #000"></div>
<div class="btn" style="left:181px;top:438px;width:73px;height:21px"></div>
<div class="t" style="left:210.60px;top:441.00px;font-size:12.5px;transform:scaleX(0.7477);">OK</div>
<div class="btn" style="left:261px;top:437px;width:75px;height:23px"></div>
<div class="t" style="left:282.40px;top:441.00px;font-size:12.5px;transform:scaleX(0.8654);">Cancel</div>
<div class="btn" style="left:342px;top:437px;width:75px;height:23px"></div>
<div class="t" style="left:367.00px;top:442.00px;font-size:12.5px;transform:scaleX(0.8370);color:#fff;"><u>A</u>pply</div>
<div class="t" style="left:366.00px;top:441.00px;font-size:12.5px;transform:scaleX(0.8370);color:#808080;"><u>A</u>pply</div>
<svg class="a" style="left:768px;top:714px" width="64" height="54" viewBox="0 0 910 768"><path d="M400 88 L800 160 L788 385 L490 742 L440 722 L130 612 Q55 565 80 470 L330 130 Q360 92 400 88 Z" fill="rgba(0,0,0,.5)"/><path d="M130 478 L470 552 L722 362 L772 398 L482 692 L160 582 Q105 535 130 478 Z" fill="rgba(255,255,255,.66)"/><path d="M345 232 L395 196 L640 268 L590 305 Z" fill="rgba(255,255,255,.66)"/></svg>
<div class="t" style="left:838.60px;top:736.40px;font-size:17px;transform:scaleX(1.0705);color:rgba(0,0,0,.38);">The Collection Book</div>
</body></html>
